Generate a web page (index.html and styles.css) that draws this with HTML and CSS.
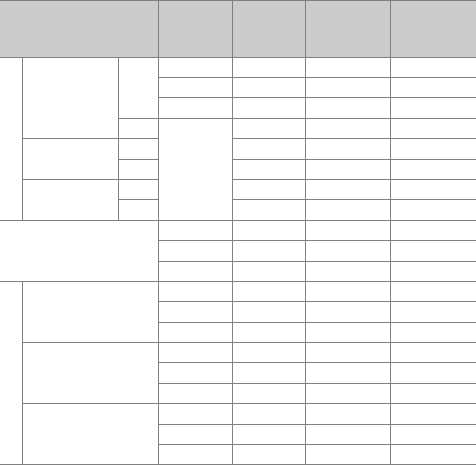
FILE: index.html
```html
<!DOCTYPE html>
<html lang="en">
<head>
<meta charset="utf-8">
<title>Table</title>
<link rel="stylesheet" href="styles.css">
</head>
<body>
<div class="frame">
<table class="grid">
  <colgroup>
    <col class="c0"><col class="c1"><col class="c2"><col class="c3"><col class="c4"><col class="c5"><col class="c6">
  </colgroup>
  <thead>
    <tr class="head"><th colspan="3"></th><th></th><th></th><th></th><th></th></tr>
  </thead>
  <tbody>
    <tr><td rowspan="8"></td><td rowspan="4"></td><td rowspan="3"></td><td></td><td></td><td></td><td></td></tr>
    <tr><td></td><td></td><td></td><td></td></tr>
    <tr><td></td><td></td><td></td><td></td></tr>
    <tr><td></td><td rowspan="5"></td><td></td><td></td><td></td></tr>
    <tr><td rowspan="2"></td><td></td><td></td><td></td><td></td></tr>
    <tr><td></td><td></td><td></td><td></td></tr>
    <tr><td rowspan="2"></td><td></td><td></td><td></td><td></td></tr>
    <tr><td></td><td></td><td></td><td></td></tr>
    <tr><td colspan="3" rowspan="3"></td><td></td><td></td><td></td><td></td></tr>
    <tr><td></td><td></td><td></td><td></td></tr>
    <tr><td></td><td></td><td></td><td></td></tr>
    <tr><td rowspan="9"></td><td colspan="2" rowspan="3"></td><td></td><td></td><td></td><td></td></tr>
    <tr><td></td><td></td><td></td><td></td></tr>
    <tr><td></td><td></td><td></td><td></td></tr>
    <tr><td colspan="2" rowspan="3"></td><td></td><td></td><td></td><td></td></tr>
    <tr><td></td><td></td><td></td><td></td></tr>
    <tr><td></td><td></td><td></td><td></td></tr>
    <tr><td colspan="2" rowspan="3"></td><td></td><td></td><td></td><td></td></tr>
    <tr><td></td><td></td><td></td><td></td></tr>
    <tr><td></td><td></td><td></td><td></td></tr>
  </tbody>
</table>
</div>
</body>
</html>
```

FILE: styles.css
```css
html, body {
  margin: 0;
  padding: 0;
  background: #ffffff;
  font-family: "Liberation Sans", Arial, sans-serif;
  font-size: 12px;
}

.frame {
  width: 476px;
  height: 465px;
  overflow: hidden;
}

.grid {
  border-collapse: collapse;
  table-layout: fixed;
  width: 500px;
  margin-left: -1px;
}

.grid th,
.grid td {
  border: 1px solid #808080;
  padding: 0;
}

.grid th {
  background: #cccccc;
}

.head {
  height: 56.6px;
}

.grid tbody tr {
  height: 20.4px;
}

.c0 { width: 23px; }
.c1 { width: 96px; }
.c2 { width: 40px; }
.c3 { width: 74px; }
.c4 { width: 73px; }
.c5 { width: 85px; }
.c6 { width: 109px; }
```
